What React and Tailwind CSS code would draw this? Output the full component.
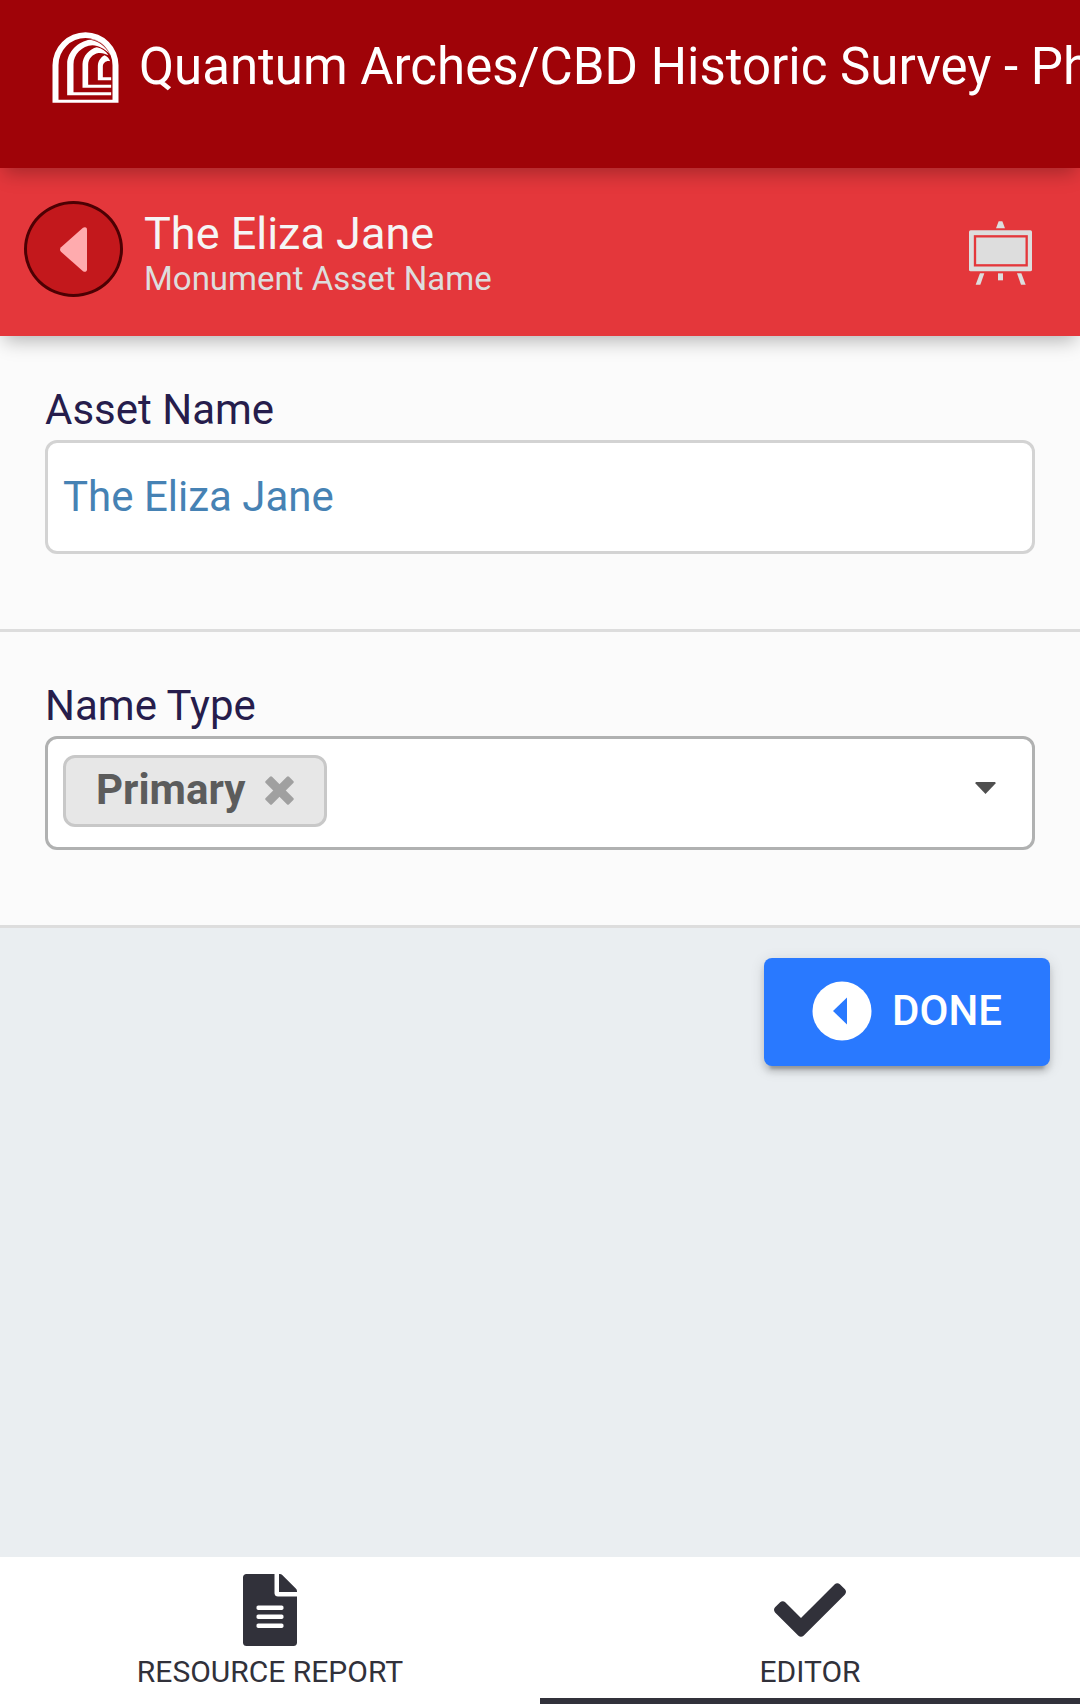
import { useState } from 'react';
import { FaCheck, FaFileAlt } from 'react-icons/fa';

function ArchesLogo() {
  return (
    <svg className="h-[71px] w-[67px] shrink-0" viewBox="66 65 200 213" fill="#fff" aria-hidden="true">
      <path
        d="M67 277V165A99 99.500 0 0 1 265 165V277ZM85 268H247V165A81 82 0 0 0 85 165Z"
        fillRule="evenodd"
      />
      <path d="M111 255V160C112 124 144 92 180 88C205 92 226 108 238 130C222 115 206 106 187 105C155 107 130 132 130 162V246H243V255Z" />
      <path d="M157 232V161C158 137 178 116 200 111C214 114 227 122 235 135C226 130 216 127 205 128C187 131 175 145 174 162V223H243V232Z" />
      <path d="M203 210V166C204 151 213 140 223 135C231 138 237 144 240 153C229 150 219 157 218 168V201H243V210Z" />
      <path d="M182 86C208 90 232 108 241 134" fill="none" stroke="#fff" strokeWidth="1.500" />
    </svg>
  );
}

function BackArrow() {
  return (
    <svg className="h-[45px] w-[27px]" viewBox="0 0 27 45" fill="#ffabae" aria-hidden="true">
      <path d="M23 .8Q24.500-.2 26 .5Q27 1 27 2.500V42.500Q27 44 26 44.600Q24.500 45.200 23 44.200L1 24.800Q-1 22.500 1 20.200Z" />
    </svg>
  );
}

function Easel() {
  return (
    <svg className="h-[64px] w-[63px]" viewBox="87 63 189 190" fill="#ddd" aria-hidden="true">
      <path d="M176 63H187L195 84H168Z" />
      <rect x="87" y="90" width="189" height="123" rx="5" />
      <rect x="105" y="108" width="155" height="87" fill="none" stroke="#e4373b" strokeWidth="7" />
      <path d="M120 219H133L121 253H107Z" />
      <path d="M174 219H189V240H174Z" />
      <path d="M231 219H244L257 253H243Z" />
    </svg>
  );
}

function Cross() {
  return (
    <svg className="h-[29px] w-[29px]" viewBox="-14.500 -14.500 29 29" fill="#a0a0a0" aria-hidden="true">
      <rect x="-16.500" y="-4.500" width="33" height="9" rx="1.500" transform="rotate(45)" />
      <rect x="-16.500" y="-4.500" width="33" height="9" rx="1.500" transform="rotate(-45)" />
    </svg>
  );
}

function Field({ id, label, children }) {
  return (
    <section className="border-b-[3px] border-[#dddddd] bg-[#fbfbfb] px-[45px] pt-12 pb-[75px]">
      <label htmlFor={id} className="mb-1 block text-[42px] leading-[52px] text-[#261d4c]">
        {label}
      </label>
      {children}
    </section>
  );
}

function Tab({ icon, label, active }) {
  return (
    <button
      type="button"
      role="tab"
      aria-selected={active}
      className={
        'flex flex-1 flex-col items-center border-b-[6px] pt-[17px] pb-2 text-[30px] leading-9 text-[#31313a] ' +
        (active ? 'border-[#31313a]' : 'border-transparent')
      }
    >
      {icon}
      <span className="mt-2">{label}</span>
    </button>
  );
}

export default function App() {
  const [name, setName] = useState('The Eliza Jane');
  const [types, setTypes] = useState(['Primary']);

  return (
    <div className="flex min-h-screen flex-col overflow-hidden bg-[#eaeef1] font-['Roboto',sans-serif]">
      <header className="relative z-20 flex h-[168px] items-start gap-5 bg-[#9f0308] pt-8 pl-[52px] shadow-[0_9px_18px_-4px_rgba(0,0,0,0.28)]">
        <ArchesLogo />
        <h1 className="mt-1 text-[51px] leading-[62px] whitespace-nowrap text-white">
          Quantum Arches/CBD Historic Survey - Ph
        </h1>
      </header>

      <div className="relative z-10 flex h-[168px] items-start bg-[#e4373b] pt-[33px] pr-12 pl-6 shadow-[0_9px_18px_-4px_rgba(0,0,0,0.28)]">
        <button
          type="button"
          aria-label="Back"
          className="flex h-24 w-[99px] items-center justify-center rounded-[50%] border-[3px] border-[#4d0003] bg-[#c3181c]"
        >
          <BackArrow />
        </button>
        <div className="mt-[7px] ml-[21px] flex-1">
          <h2 className="text-[45px] leading-[52px] text-[#f5f5f5]">The Eliza Jane</h2>
          <p className="text-[33px] leading-[38px] text-[#dddddd]">Monument Asset Name</p>
        </div>
        <button type="button" aria-label="Show card" className="mt-5">
          <Easel />
        </button>
      </div>

      <main className="flex-1">
        <Field id="asset-name" label="Asset Name">
          <input
            id="asset-name"
            type="text"
            value={name}
            onChange={(e) => setName(e.target.value)}
            className="block h-[114px] w-full rounded-xl border-[3px] border-[#d3d3d3] bg-white px-[15px] pb-[2px] text-[42px] text-[#4682b4] outline-none"
          />
        </Field>

        <Field id="name-type" label="Name Type">
          <div className="relative flex h-[114px] items-start rounded-xl border-[3px] border-[#b0b1b1] bg-white pt-4 pl-[15px]">
            {types.map((type) => (
              <span
                key={type}
                className="flex h-[72px] items-center gap-5 rounded-xl border-[3px] border-[#c8c8c8] bg-[#e7e7e7] px-[30px] pb-[2px] text-[42px] leading-[50px] font-bold text-[#5c5c5c]"
              >
                {type}
                <button type="button" aria-label={'Remove ' + type} onClick={() => setTypes([])}>
                  <Cross />
                </button>
              </span>
            ))}
            <select
              id="name-type"
              value=""
              onChange={(e) => setTypes([e.target.value])}
              className="h-[72px] min-w-0 flex-1 appearance-none bg-transparent text-[42px] outline-none"
            >
              <option value="" />
              <option value="Primary">Primary</option>
            </select>
            <svg
              className="pointer-events-none absolute top-[43px] right-9 h-3 w-[21px]"
              viewBox="0 0 21 12"
              fill="#4f4f4f"
              aria-hidden="true"
            >
              <path d="M1 0H20Q21 .5 20.500 1.500L10.500 12L.5 1.500Q0 .5 1 0Z" />
            </svg>
          </div>
        </Field>

        <div className="flex justify-end p-[30px]">
          <button
            type="button"
            className="flex h-[108px] items-center gap-5 rounded-lg bg-[#2979ff] px-12 pb-[2px] text-[42px] leading-[50px] font-medium text-white shadow-[0_9px_3px_-6px_rgba(0,0,0,0.2),0_6px_6px_0_rgba(0,0,0,0.14),0_3px_15px_0_rgba(0,0,0,0.12)]"
          >
            <svg className="h-[60px] w-[60px]" viewBox="0 0 60 60" aria-hidden="true">
              <circle cx="30" cy="30" r="29.500" fill="#fff" />
              <path d="M35 16.500V43.500L21 30Z" fill="#2979ff" />
            </svg>
            DONE
          </button>
        </div>
      </main>

      <nav role="tablist" aria-label="Views" className="flex bg-white">
        <Tab icon={<FaFileAlt className="h-[72px] w-[54px]" />} label="RESOURCE REPORT" active={false} />
        <Tab icon={<FaCheck className="h-[72px] w-[72px]" />} label="EDITOR" active />
      </nav>
    </div>
  );
}
